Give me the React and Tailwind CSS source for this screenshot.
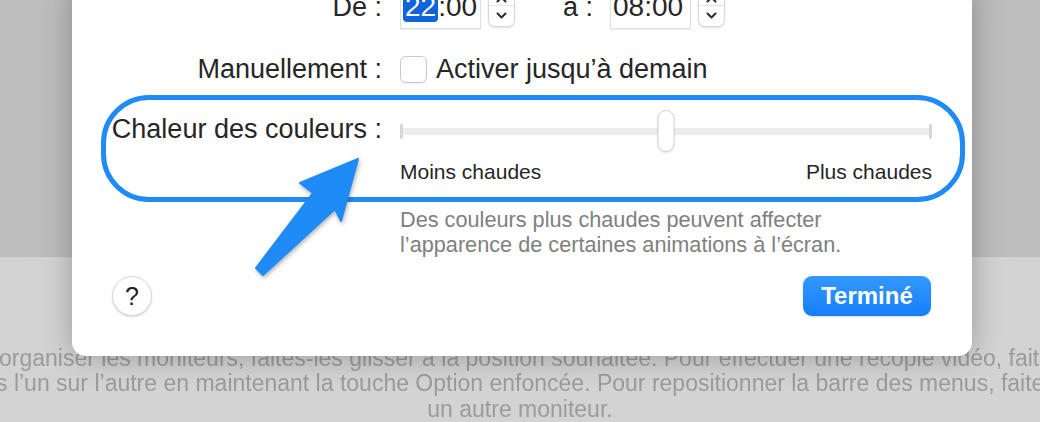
import React from "react";

const Chevron = ({ up }) => (
  <svg width="11" height="7" viewBox="0 0 11 7">
    <path
      d={up ? "M1.5 5.5 L5.5 1.5 L9.5 5.5" : "M1.5 1.5 L5.5 5.5 L9.5 1.5"}
      fill="none"
      stroke="#2b2b2b"
      strokeWidth="2"
      strokeLinecap="round"
      strokeLinejoin="round"
    />
  </svg>
);

const Stepper = () => (
  <div className="w-[27px] h-[42px] rounded-[7px] bg-white border border-[#d8d8d8] shadow-[0_1px_2px_rgba(0,0,0,0.12)] overflow-hidden flex flex-col items-center">
    <div className="mt-[10px]">
      <Chevron up />
    </div>
    <div className="mt-[2px] w-full h-px bg-[#e4e4e4]" />
    <div className="mt-[6px]">
      <Chevron />
    </div>
  </div>
);

const TimeField = ({ hours, minutes, selected }) => (
  <div className="w-[81px] h-[44px] bg-white border border-t-0 border-[#e0e0e0] shadow-[0_1px_1px_rgba(0,0,0,0.06)] pl-[2px] text-[28px] leading-[44px] text-[#262626]">
    {selected ? (
      <span className="bg-[#0f63db] text-white rounded-[4px] px-[2px]">{hours}</span>
    ) : (
      <span>{hours}</span>
    )}
    <span>:{minutes}</span>
  </div>
);

const row = "grid grid-cols-[310px_532px] gap-x-[18px]";

export default function App() {
  return (
    <div className="relative w-[1040px] h-[422px] overflow-hidden font-['Liberation_Sans',Arial,sans-serif]">
      {/* fenêtre derrière la feuille */}
      <div className="flex flex-col h-full">
        <div className="h-[262px] bg-gradient-to-r from-[#bdbdbd] via-[#b9b9b9] to-[#bdbdbd]" />
        <div className="flex-1 bg-[#d3d3d3] pt-[89px] text-[23px] leading-[25.5px] text-[#9b9b9b] blur-[0.3px]">
          <p className="whitespace-nowrap ml-[-1px]">
            organiser les moniteurs, faites-les glisser à la position souhaitée. Pour effectuer une recopie vidéo, faites glisser
          </p>
          <p className="whitespace-nowrap ml-[-4px]">
            s l’un sur l’autre en maintenant la touche Option enfoncée. Pour repositionner la barre des menus, faites-la glisser
          </p>
          <p className="whitespace-nowrap text-center">un autre moniteur.</p>
        </div>
      </div>

      {/* feuille Night Shift */}
      <div className="absolute left-[72px] top-[-15px] w-[900px] h-[371px] bg-white rounded-[14px] shadow-[0_0_30px_rgba(0,0,0,0.28)] flex flex-col text-[#262626]">
        {/* De / à */}
        <div className={`${row} h-[44px]`}>
          <div className="text-right text-[27px] leading-[44px]">De :</div>
          <div className="flex items-start">
            <TimeField hours="22" minutes="00" selected />
            <div className="ml-[7px]">
              <Stepper />
            </div>
            <div className="ml-[48px] text-[27px] leading-[44px]">à :</div>
            <div className="ml-[17px]">
              <TimeField hours="08" minutes="00" />
            </div>
            <div className="ml-[7px]">
              <Stepper />
            </div>
          </div>
        </div>

        {/* Manuellement */}
        <div className={`${row} h-[36px] mt-[22px]`}>
          <div className="text-right text-[27px] leading-[36px]">Manuellement :</div>
          <div className="flex items-center gap-[9px]">
            <div className="w-[27px] h-[27px] rounded-[6px] border border-[#c9c9c9] bg-white shadow-[0_1px_1px_rgba(0,0,0,0.06)]" />
            <span className="text-[27px] leading-[36px]">Activer jusqu’à demain</span>
          </div>
        </div>

        {/* Chaleur des couleurs */}
        <div className={`${row} h-[42px] mt-[23px] items-start`}>
          <div className="text-right text-[27px] leading-[36px] mt-[1px]">Chaleur des couleurs :</div>
          <div className="relative h-[42px] flex items-center">
            <div className="w-[3px] h-[15px] bg-[#d6d6d6] rounded-[1px]" />
            <div className="flex-1 h-[7px] bg-[#ededed]" />
            <div className="w-[3px] h-[15px] bg-[#d6d6d6] rounded-[1px]" />
            <div className="absolute left-1/2 -translate-x-1/2 top-0 w-[17px] h-[42px] rounded-full bg-white border border-[#d4d4d4] shadow-[0_1px_2px_rgba(0,0,0,0.12)]" />
          </div>
        </div>

        <div className={`${row} h-[26px] mt-[7px]`}>
          <div />
          <div className="flex justify-between text-[21px] leading-[26px]">
            <span>Moins chaudes</span>
            <span>Plus chaudes</span>
          </div>
        </div>

        {/* description */}
        <div className={`${row} mt-[23px]`}>
          <div />
          <p className="text-[21.7px] leading-[24.5px] text-[#808080]">
            Des couleurs plus chaudes peuvent affecter
            <br />
            l’apparence de certaines animations à l’écran.
          </p>
        </div>

        {/* boutons */}
        <div className="flex justify-between items-center mt-[19px] pl-[40px] pr-[41px]">
          <button className="w-[40px] h-[40px] rounded-full bg-white border border-[#d6d6d6] shadow-[0_1px_2px_rgba(0,0,0,0.15)] text-[25px] leading-none text-[#1f1f1f] flex items-center justify-center">
            ?
          </button>
          <button className="w-[128px] h-[40px] rounded-[9px] bg-gradient-to-b from-[#3398ff] to-[#147ff8] shadow-[0_1px_2px_rgba(0,0,0,0.15)] text-white text-[24px] font-bold leading-none">
            Terminé
          </button>
        </div>
      </div>

      {/* annotation : cadre et flèche */}
      <div className="absolute left-[101px] top-[95px] w-[864px] h-[107px] border-[5px] border-[#1f8bf6] rounded-[48px]" />
      <svg
        className="absolute left-[248px] top-[152px] drop-shadow-[1px_2px_2px_rgba(0,0,0,0.3)]"
        width="116"
        height="130"
        viewBox="248 152 116 130"
      >
        <polygon
          points="358,159 341,221 335,209 263,275 256,268 313,193 300,183"
          fill="#1f8bf6"
          stroke="#1f8bf6"
          strokeWidth="2"
          strokeLinejoin="round"
        />
      </svg>
    </div>
  );
}
